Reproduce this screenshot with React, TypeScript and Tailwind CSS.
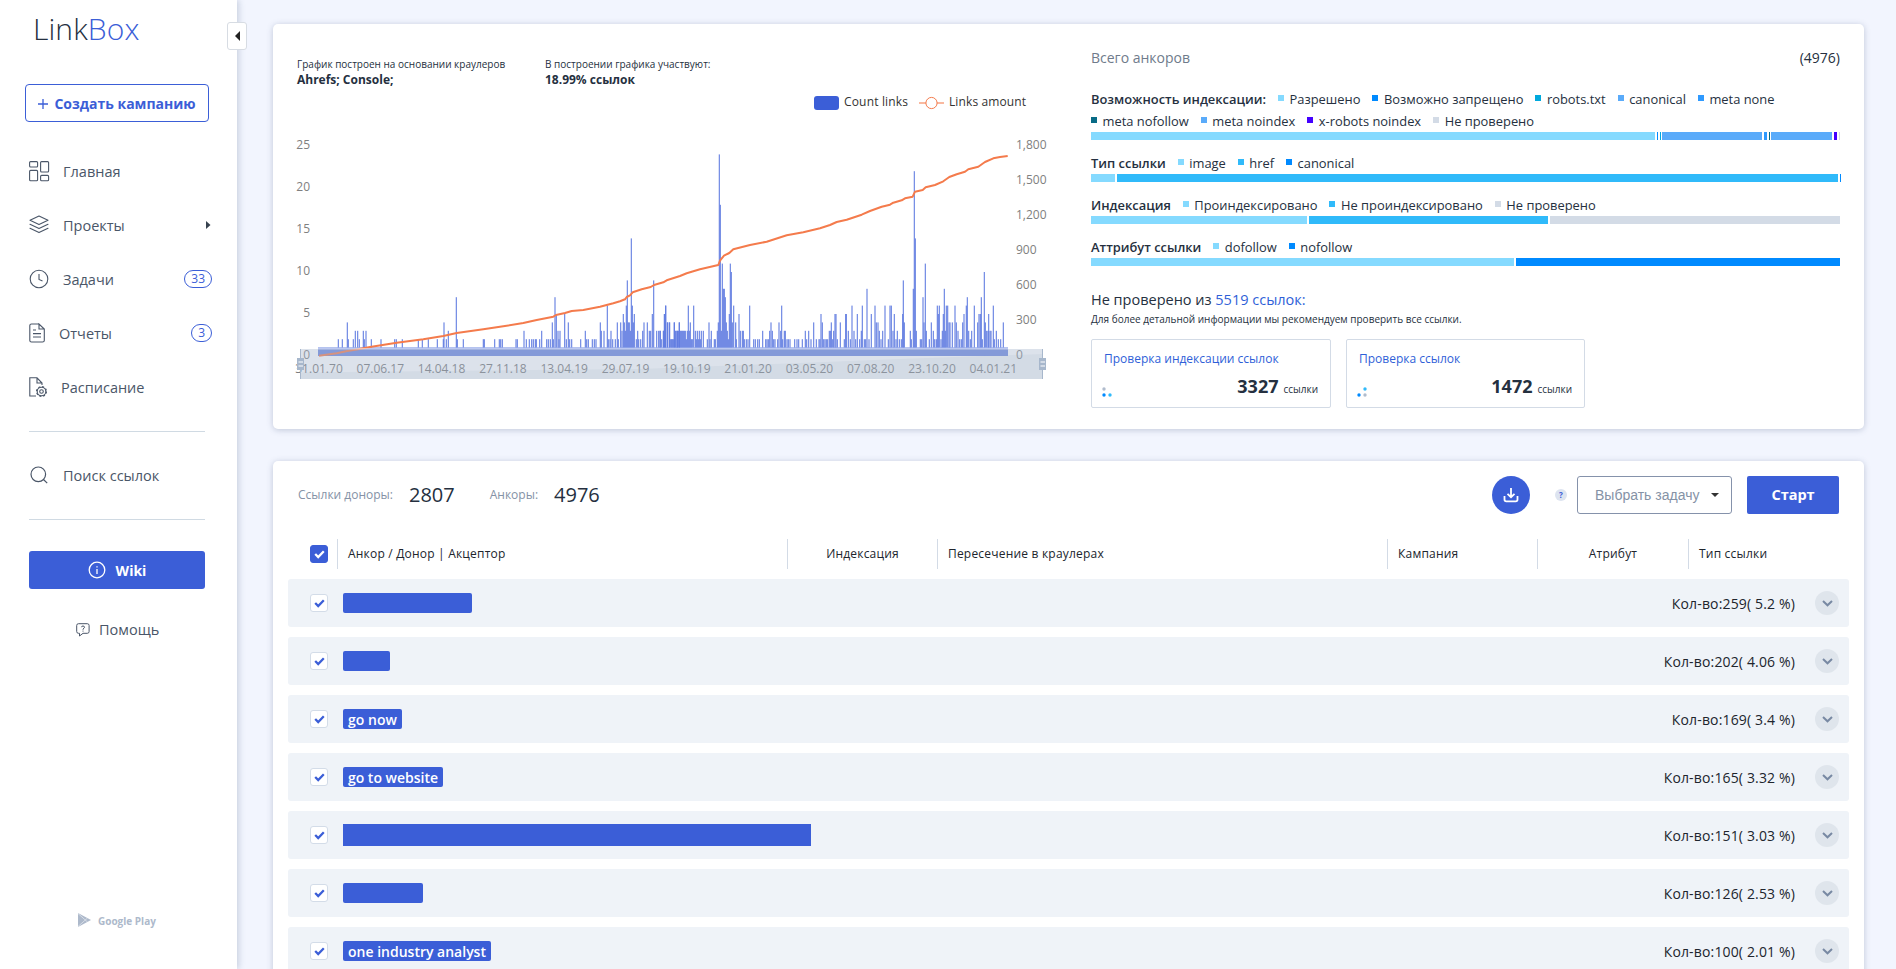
import { ReactNode } from "react";
import clsx from "clsx";

const INK = "#4a5668";

type Bar = [number, number];

// [offset in thirds of a pixel, links found that day]
const EARLY_BARS: Bar[] = [
  [205, 2], [217, 2], [232, 4], [235, 2], [250, 2], [256, 3], [263, 3], [268, 2], [280, 3], [283, 2], [288, 3],
  [304, 2], [333, 2], [374, 2], [379, 2], [397, 2], [445, 2], [457, 2], [475, 2], [502, 2], [520, 2], [522, 4],
  [529, 2], [535, 3], [559, 7], [562, 2], [580, 2], [640, 2], [643, 2], [674, 2], [688, 2], [692, 2], [697, 2],
  [738, 2], [742, 2], [762, 3], [769, 2], [778, 2], [785, 2], [790, 2], [796, 2], [799, 2], [809, 2], [815, 3],
  [830, 2], [835, 2], [841, 2], [847, 4], [850, 2], [855, 7], [859, 5], [864, 3], [867, 2], [870, 3], [884, 5],
  [889, 2], [895, 4], [899, 2], [905, 2], [932, 2], [946, 3], [950, 2], [955, 2], [967, 2], [973, 2], [978, 2],
  [991, 4], [994, 3], [1002, 3], [1012, 6], [1015, 2], [1020, 2], [1023, 3], [1028, 2], [1036, 2], [1042, 4],
  [1045, 2], [1052, 4], [1056, 3], [1060, 5], [1063, 4], [1066, 3], [1069, 6], [1072, 9], [1075, 4], [1078, 4],
  [1081, 3], [1084, 14], [1087, 6], [1090, 4], [1093, 5], [1099, 2], [1103, 3], [1106, 2], [1112, 2], [1118, 3],
  [1122, 4], [1132, 4], [1138, 3], [1142, 3], [1147, 5], [1151, 9], [1160, 3], [1166, 3], [1171, 3], [1180, 3],
  [1183, 5], [1187, 6], [1192, 4], [1199, 4], [1205, 2], [1210, 2], [1213, 4], [1218, 3], [1222, 3], [1228, 4],
];

const LATE_BARS: Bar[] = [
  [0, 3], [5, 2], [11, 3], [14, 5], [17, 6], [23, 4], [28, 4], [32, 2], [37, 2], [43, 4], [47, 3], [52, 3],
  [55, 3], [58, 4], [61, 3], [64, 3], [67, 3], [70, 3], [73, 3], [76, 3], [79, 2], [82, 3], [85, 6], [88, 3],
  [91, 4], [94, 2], [97, 2], [101, 6], [106, 3], [109, 2], [112, 3], [115, 2], [118, 3], [121, 2], [124, 3],
  [130, 3], [142, 2], [147, 4], [150, 2], [154, 3], [163, 2], [166, 2], [172, 3], [175, 4], [178, 24], [181, 18],
  [184, 3], [187, 11], [190, 8], [193, 8], [196, 7], [199, 4], [202, 3], [205, 2], [208, 5], [211, 11], [214, 10],
  [217, 4], [221, 6], [227, 4], [229, 2], [237, 5], [241, 3], [247, 3], [250, 3], [253, 2], [259, 2], [264, 2],
  [269, 6], [281, 2], [286, 2], [293, 2], [298, 2], [308, 3], [317, 2], [321, 2], [325, 2], [329, 3], [333, 4],
  [337, 3], [341, 2], [345, 2], [353, 2], [357, 4], [362, 3], [365, 6], [368, 2], [373, 3], [376, 3], [381, 2],
  [385, 2], [390, 2], [404, 2], [411, 2], [416, 2], [427, 2], [436, 3], [440, 2], [446, 3], [453, 2], [461, 4],
  [469, 2], [477, 2], [480, 2], [483, 5], [487, 4], [491, 2], [495, 2], [499, 2], [503, 2], [508, 3], [512, 3],
  [514, 4], [518, 2], [521, 3], [525, 5], [528, 5], [532, 2], [541, 4], [553, 2], [557, 5], [559, 5], [565, 3],
  [571, 2], [576, 6], [582, 3], [587, 2], [592, 5], [599, 2], [604, 3], [607, 6], [613, 2], [617, 2], [621, 8],
  [627, 2], [634, 5], [645, 6], [649, 4], [654, 4], [658, 3], [663, 2], [668, 3], [675, 6], [685, 2], [690, 6],
  [694, 6], [699, 3], [703, 5], [708, 2], [712, 3], [718, 2], [724, 2], [728, 5], [730, 9], [733, 4], [751, 3],
  [754, 2], [760, 8], [763, 22], [766, 14], [769, 3], [781, 2], [785, 2], [789, 7], [792, 4], [796, 11],
  [799, 3], [808, 2], [814, 4], [820, 3], [824, 2], [829, 2], [832, 6], [835, 5], [838, 6], [843, 2], [847, 3],
  [850, 5], [853, 8], [856, 3], [859, 6], [863, 6], [867, 4], [870, 4], [877, 4], [885, 6], [889, 4], [894, 3],
  [899, 2], [904, 2], [908, 4], [912, 5], [919, 6], [922, 7], [926, 3], [931, 2], [935, 3], [943, 6], [953, 4],
  [957, 5], [961, 5], [964, 7], [967, 2], [973, 10], [976, 4], [980, 3], [984, 3], [986, 5], [990, 3], [993, 3],
  [1000, 6], [1003, 2], [1009, 3], [1015, 2], [1022, 2], [1030, 4],
];

const BARS: Bar[] = [
  ...EARLY_BARS.map(([x, v]): Bar => [270 + x / 3, v]),
  ...LATE_BARS.map(([x, v]): Bar => [660 + x / 3, v]),
];

const LINE =
  "319,355.7 336.7,353.3 347.3,351 358.3,349.3 370,347 396.7,342.7 423.3,339.3 443.3,336 456.7,333 483.3,329.3 503.3,326.3 523.3,323 536.7,320 553.3,316.7 556,315 565,313 571.7,311 583.3,310 600,306.7 613.3,303.3 620,301.3 625,299.3 626.7,297 630,295.3 632.7,292.3 641.7,289.3 650.7,287 654,285 663.3,282.3 666.7,280.3 680,276 " +
  "686.7,273.3 700,269.3 718.3,265 720,260.7 724,255.7 729.3,253 733.3,249.3 750,245 766.7,241.7 786.7,235.3 803.3,232.3 820,228.3 830,225 836.7,222 846.7,219.7 861.7,214.7 870,211 881.7,206.7 890,204.7 893.3,202.7 901.7,200.3 905,198.3 912.7,196.7 915,191.7 922.7,190 925.7,187.3 935,185 943.3,181.3 949.3,177 956.7,174.3 965,171.7 968.3,169.3 978.3,166.7 985,162 993.3,158.3 1000,157 1007.7,156";

const DATES = ["31.01.70", "07.06.17", "14.04.18", "27.11.18", "13.04.19", "29.07.19", "19.10.19", "21.01.20", "03.05.20", "07.08.20", "23.10.20", "04.01.21"];

function Chart() {
  return (
    <svg className="-ml-1 block" width="764" height="300" viewBox="293 88 764 300" fontFamily="Open Sans, sans-serif" fontSize="12" fill="#808080">
      <rect x="814" y="96" width="25" height="14" rx="3" fill="#3b5ed7" />
      <text x="844" y="106" fill="#333" textLength="64">Count links</text>
      <path d="M919 103h25" stroke="#f47b4c" strokeWidth="1.5" opacity=".7" />
      <circle cx="931.5" cy="103" r="5.6" fill="#fff" stroke="#f47b4c" />
      <text x="949" y="106" fill="#333" textLength="77">Links amount</text>
      {[25, 20, 15, 10, 5, 0].map((v, i) => (
        <text key={v} x="310" y={149 + i * 42} textAnchor="end">{v}</text>
      ))}
      {["1,800", "1,500", "1,200", "900", "600", "300", "0"].map((v, i) => (
        <text key={v} x="1016" y={149 + i * 35}>{v}</text>
      ))}
      {DATES.map((d, i) => (
        <text key={d} x={319 + i * 61.3} y="373" textAnchor="middle" textLength="47.5" fill="#777">{d}</text>
      ))}
      <rect x="318" y="347.5" width="690" height="8.5" fill="#6d87e0" />
      {BARS.map(([x, v], i) => (
        <rect key={i} x={x - 0.6} y={356 - v * 8.4} width="1.2" height={v * 8.4 - 8.5} fill="#5f7be0" opacity=".9" />
      ))}
      <polyline points={LINE} fill="none" stroke="#f47b4c" strokeWidth="2" strokeLinejoin="round" />
      <path d="M318 348.9H1008" stroke="#fff" strokeWidth="0.9" />
      <path d="M300 372.5L640 369 800 363 900 359 1043 354V379H300Z" fill="#8c9fb5" opacity=".13" />
      <rect x="300" y="349" width="743" height="30" fill="#a7b7cc" opacity=".4" />
      {[300.5, 1042.5].map((x) => (
        <g key={x}>
          <path d={`M${x} 349v30`} stroke="#a7b7cc" />
          <rect x={x - 3.5} y="358" width="7" height="12" fill="#a7b7cc" />
          <path d={`M${x - 2} 362h4.5M${x - 2} 366h4.5`} stroke="#fff" strokeWidth="1.1" />
        </g>
      ))}
    </svg>
  );
}

type Item = [string, string];
type Segment = [number, string];

const GAP = "bg-white";

function Stat({ title, items, more, segments }: { title: string; items: Item[]; more?: Item[]; segments: Segment[] }) {
  const renderItem = ([color, label]: Item) => (
    <span className="flex items-center gap-[5.5px]" key={label}>
      <i className={clsx("relative -top-px size-1.5", color)} />
      {label}
    </span>
  );
  return (
    <div className="mb-3">
      <div className="flex h-[22px] items-center gap-3 pt-px text-[12.9px] whitespace-nowrap">
        <span className="font-semibold">{title}</span>
        {items.map(renderItem)}
      </div>
      {more ? (
        <div className="flex h-[22px] items-center gap-3 pt-px text-[12.9px] whitespace-nowrap">{more.map(renderItem)}</div>
      ) : null}
      <div className="flex h-2">
        {segments.map(([width, color], i) => (
          <span className={clsx("h-2 shrink-0", color)} key={i} style={{ width }} />
        ))}
      </div>
    </div>
  );
}

function CheckBoxCard({ title, count, dots, width }: { title: string; count: string; dots: ReactNode; width: string }) {
  return (
    <div className={clsx("flex h-[69px] flex-col justify-between rounded-[2px] border border-[#d3dbe6] px-3 pt-[11px] pb-[9px]", width)}>
      <div className="text-[12px] leading-4 text-[#2f5fd8]">{title}</div>
      <div className="flex items-baseline">
        <svg className="mb-px -ml-0.5 self-end" width="10" height="10">{dots}</svg>
        <span className="ml-auto text-[18px] leading-6 font-bold">{count}</span>
        <span className="ml-[5px] text-[10px]">ссылки</span>
      </div>
    </div>
  );
}

function NavItem({ icon, label, gap, children }: { icon: ReactNode; label: string; gap: string; children?: ReactNode }) {
  return (
    <div className="flex h-[54px] items-center pr-[25px] pl-[29px] text-[14.5px] font-medium">
      <svg width="21" height="21" viewBox="0 0 21 21" fill="none" stroke={INK} strokeWidth="1.1">{icon}</svg>
      <span className={clsx("pt-px", gap)}>{label}</span>
      <span className="ml-auto flex">{children}</span>
    </div>
  );
}

function Badge({ children }: { children: ReactNode }) {
  return (
    <span className="flex h-[18px] items-center rounded-full border border-[#3b5ed7] px-1.5 text-[12px] font-normal text-[#3b5ed7]">
      {children}
    </span>
  );
}

function Sidebar() {
  return (
    <aside className="relative z-10 flex h-full w-[237px] shrink-0 flex-col bg-white text-[#4a5668] shadow-[2px_0_6px_rgba(60,80,120,0.22)]">
      <div className="absolute top-[22px] left-[227px] flex h-7 w-5 items-center justify-center rounded-[3px] border border-[#d7dce3] bg-white">
        <svg width="5" height="10"><path d="M5 0v10L0 5z" fill="#222" /></svg>
      </div>
      <div className="h-[84px] pt-2 pl-[33px] text-[30px] leading-[42px] font-light tracking-[0.1px] text-[#253040]">
        Link<span className="text-[#3b5ed7]">Box</span>
      </div>
      <button className="ml-[25px] flex h-[38px] w-[184px] items-center justify-center rounded-[4px] border border-[#3b5ed7] pt-px text-[14px] font-bold text-[#3b5ed7]" type="button">
        <svg className="mr-1.5" width="10" height="10"><path d="M5 0v10M0 5h10" stroke="#3b5ed7" strokeWidth="1.3" /></svg>
        Создать кампанию
      </button>
      <nav className="mt-[22px]">
        <NavItem
          gap="ml-[13px]"
          icon={
            <>
              <rect x=".6" y=".6" width="8" height="5.4" rx="1" />
              <rect x="11.6" y=".6" width="8" height="10.4" rx="1" />
              <rect x=".6" y="9.4" width="8" height="10.4" rx="1" />
              <rect x="11.6" y="14.4" width="8" height="5.4" rx="1" />
            </>
          }
          label="Главная"
        />
        <NavItem
          gap="ml-[13px]"
          icon={<path d="M10 1l9 4.3-9 4.3-9-4.3zM1 9.3l9 4.3 9-4.3M1 13.3l9 4.3 9-4.3" strokeLinejoin="round" strokeLinecap="round" />}
          label="Проекты"
        >
          <svg className="mr-px" width="5" height="8"><path d="M0 0l4.5 4L0 8z" fill="#37424f" /></svg>
        </NavItem>
        <NavItem gap="ml-[13px]" icon={<><circle cx="10" cy="10" r="8.8" /><path d="M10 5v5.5l3.5 1.5" /></>} label="Задачи">
          <Badge>33</Badge>
        </NavItem>
        <NavItem
          gap="ml-[9px]"
          icon={<path d="M10 1H2.5Q.8 1 .8 2.5v15Q.8 19 2.5 19h11q1.8 0 1.8-1.5V6L10 1v5h5M4 7h3M4 10.6h8M4 14h8" />}
          label="Отчеты"
        >
          <Badge>3</Badge>
        </NavItem>
        <NavItem
          gap="ml-[11px]"
          icon={
            <>
              <path d="M7 19H.8V.8H8L13 6v2M8 .8V6h5" />
              <circle cx="12.5" cy="14.5" r="1.8" />
              <circle cx="12.5" cy="14.5" r="4.3" />
              <circle cx="12.5" cy="14.5" r="5" strokeDasharray="2 1.93" />
            </>
          }
          label="Расписание"
        />
      </nav>
      <div className="mx-[29px] mt-[17px] h-px w-[176px] bg-[#d0dae3]" />
      <div className="flex h-[87px] items-center pl-[30px] text-[14.5px] font-medium">
        <svg width="19" height="19" fill="none" stroke={INK} strokeWidth="1.2"><circle cx="8.3" cy="8.3" r="7.3" /><path d="M13.5 13.5l3.7 3.7" /></svg>
        <span className="ml-[14px]">Поиск ссылок</span>
      </div>
      <div className="mx-[29px] h-px w-[176px] bg-[#d0dae3]" />
      <div className="mt-[31px] ml-[29px] flex h-[38px] w-[176px] items-center justify-center rounded-[3px] bg-[#3b5ed7] text-[14px] font-bold text-white">
        <svg className="mr-[10px]" width="18" height="18" fill="none" stroke="#fff" strokeWidth="1.3"><circle cx="9" cy="9" r="7.8" /><path d="M9 8v5M9 5.2v1.4" /></svg>
        Wiki
      </div>
      <div className="mt-[27px] ml-[76px] flex h-7 items-center text-[14.5px] font-medium">
        <svg className="mr-[9px]" width="14" height="14" fill="none" stroke={INK}>
          <path d="M2.5.7h8.8q1.8 0 1.8 1.8v6q0 1.8-1.8 1.8H7L3.5 13v-2.700h-1Q.7 10.300.7 8.500v-6Q.7.7 2.500.7z" />
          <path d="M5.500 4.200Q5.500 3 7 3t1.500 1.300Q8.500 5 7 6v.7M7 7.600v1" />
        </svg>
        Помощь
      </div>
      <div className="mt-auto mb-[38px] ml-[78px] flex items-center text-[10px] leading-5 font-bold text-[#adb9cb]">
        <svg className="relative -top-px mr-[7px]" width="13" height="14"><path d="M0 0l13 7-13 7z" fill="#adb9cb" /><path d="M0 .5L9.500 9M0 13.500L9.500 5" stroke="#fff" strokeWidth=".5" /></svg>
        Google Play
      </div>
    </aside>
  );
}

function Check({ solid }: { solid?: boolean }) {
  return (
    <span
      className={clsx(
        "ml-[22px] flex size-[18px] shrink-0 items-center justify-center rounded-[3px] border",
        solid ? "border-[#3b5ed7] bg-[#3b5ed7]" : "border-[#d3dce8] bg-white"
      )}
    >
      <svg width="11" height="9" fill="none"><path d="M1.200 4l3 3L9.800 1.300" stroke={solid ? "#fff" : "#3b5ed7"} strokeWidth="2.300" /></svg>
    </span>
  );
}

const ROWS = [
  { tag: "h-5 w-[129px] rounded-[2px]", label: "", count: "259( 5.2 %)" },
  { tag: "h-5 w-[47px] rounded-[2px]", label: "", count: "202( 4.06 %)" },
  { tag: "h-5 w-[59px] rounded-[2px]", label: "go now", count: "169( 3.4 %)" },
  { tag: "h-5 w-[100px] rounded-[2px]", label: "go to website", count: "165( 3.32 %)" },
  { tag: "h-[22px] w-[468px]", label: "", count: "151( 3.03 %)" },
  { tag: "h-5 w-[80px] rounded-[2px]", label: "", count: "126( 2.53 %)" },
  { tag: "h-5 w-[148px] rounded-[2px]", label: "one industry analyst", count: "100( 2.01 %)" },
];

const CARD = "rounded-[5px] bg-white shadow-[0_1px_6px_rgba(60,80,120,0.28)]";

export default function App() {
  return (
    <div className="flex h-[969px] w-[1896px] overflow-hidden bg-[#f2f5fe] font-['Open_Sans',sans-serif] text-[#253040]">
      <Sidebar />
      <main className="flex flex-1 flex-col gap-8 pt-6 pr-8 pl-9">
        <section className={clsx("flex h-[405px] shrink-0", CARD)}>
          <div className="w-[818px] pl-6">
            <div className="flex h-16 gap-[40px] pt-[32px] text-[10px] leading-4 whitespace-nowrap">
              <div className="w-[208px]">
                <div>График построен на основании краулеров</div>
                <div className="text-[12px] font-bold">Ahrefs; Console;</div>
              </div>
              <div>
                <div>В построении графика участвуют:</div>
                <div className="text-[12px] font-bold">18.99% ссылок</div>
              </div>
            </div>
            <Chart />
          </div>
          <div className="w-[750px]">
            <div className="flex h-[64px] w-[749px] justify-between pt-6 text-[14px] leading-5">
              <span className="text-[#6f7b8b]">Всего анкоров</span>
              <span className="font-medium">(4976)</span>
            </div>
            <Stat
              title="Возможность индексации:"
              items={[["bg-[#85daff]", "Разрешено"], ["bg-[#008aff]", "Возможно запрещено"], ["bg-[#00a9dd]", "robots.txt"], ["bg-[#5aabfa]", "canonical"], ["bg-[#2f9aff]", "meta none"]]}
              more={[["bg-[#086b86]", "meta nofollow"], ["bg-[#5aabfa]", "meta noindex"], ["bg-[#4400ff]", "x-robots noindex"], ["bg-[#d3dbe6]", "Не проверено"]]}
              segments={[
                [564, "bg-[#85daff]"], [2, GAP], [1, "bg-[#008aff]"], [2, GAP], [1, "bg-[#00a9dd]"], [1, GAP], [100, "bg-[#5aabfa]"], [2, GAP],
                [3, "bg-[#2f9aff]"], [2, GAP], [1, "bg-[#086b86]"], [1, GAP], [61, "bg-[#5aabfa]"], [2, GAP], [3, "bg-[#4400ff]"], [2, GAP], [1, "bg-[#d3dbe6]"],
              ]}
            />
            <Stat
              title="Тип ссылки"
              items={[["bg-[#85daff]", "image"], ["bg-[#30bafa]", "href"], ["bg-[#008aff]", "canonical"]]}
              segments={[[24, "bg-[#85daff]"], [2, GAP], [721, "bg-[#30bafa]"], [2, GAP], [1, "bg-[#008aff]"]]}
            />
            <Stat
              title="Индексация"
              items={[["bg-[#85daff]", "Проиндексировано"], ["bg-[#30bafa]", "Не проиндексировано"], ["bg-[#d3dbe6]", "Не проверено"]]}
              segments={[[216, "bg-[#85daff]"], [2, GAP], [239, "bg-[#30bafa]"], [2, GAP], [290, "bg-[#d3dbe6]"]]}
            />
            <Stat
              title="Аттрибут ссылки"
              items={[["bg-[#85daff]", "dofollow"], ["bg-[#008aff]", "nofollow"]]}
              segments={[[423, "bg-[#85daff]"], [2, GAP], [324, "bg-[#008aff]"]]}
            />
            <div className="mt-[23px] text-[14.5px] leading-[22px] font-medium">
              Не проверено из <span className="text-[#2f5fd8]">5519 ссылок:</span>
            </div>
            <div className="text-[10px] leading-4">Для более детальной информации мы рекомендуем проверить все ссылки.</div>
            <div className="mt-3 flex gap-[15px]">
              <CheckBoxCard
                count="3327"
                dots={<><circle cx="2" cy="2" r="1.700" fill="#b0bccd" /><circle cx="2" cy="8" r="1.700" fill="#008aff" /><circle cx="8" cy="8" r="1.700" fill="#30bafa" /></>}
                title="Проверка индексации ссылок"
                width="w-[240px]"
              />
              <CheckBoxCard
                count="1472"
                dots={<><circle cx="8" cy="2" r="1.700" fill="#30bafa" /><circle cx="2" cy="8" r="1.700" fill="#008aff" /><circle cx="8" cy="8" r="1.700" fill="#b0bccd" /></>}
                title="Проверка ссылок"
                width="w-[239px]"
              />
            </div>
          </div>
        </section>

        <section className={clsx("h-[560px] shrink-0 px-[15px]", CARD)}>
          <div className="flex h-[68px] items-center px-[10px]">
            <span className="text-[12px] text-[#8592a6]">Ссылки доноры:</span>
            <span className="ml-4 text-[20px] font-medium">2807</span>
            <span className="ml-[35px] text-[12px] text-[#8592a6]">Анкоры:</span>
            <span className="ml-4 text-[20px] font-medium">4976</span>
            <span className="ml-auto flex size-[38px] items-center justify-center rounded-full bg-[#3b5ed7]">
              <svg width="16" height="16" fill="none" stroke="#fff" strokeWidth="1.800"><path d="M8 1v9M4.500 6.800L8 10.200l3.500-3.400M1.500 9v3.500q0 1.800 1.800 1.800h9.400q1.800 0 1.800-1.800V9" /></svg>
            </span>
            <span className="ml-[25px] flex size-3 items-center justify-center rounded-full bg-[#dde4f0] text-[8px] font-bold text-[#3b5ed7]">?</span>
            <span className="ml-[10px] flex h-[38px] w-[155px] items-center rounded-[3px] border border-[#8592ab] pl-[17px] font-['Liberation_Sans',sans-serif] text-[14px] text-[#8592a6]">
              Выбрать задачу
              <svg className="ml-auto mr-3" width="8" height="4"><path d="M0 0h8L4 4z" fill="#333" /></svg>
            </span>
            <span className="ml-[15px] flex h-[38px] w-[92px] items-center justify-center rounded-[2px] bg-[#3b5ed7] text-[14.500px] font-bold text-white">Старт</span>
          </div>
          <div className="mt-[10px] flex h-[30px] items-center text-[12px] font-medium tracking-[0.2px] text-[#20252d]">
            <div className="w-[49px]"><Check solid /></div>
            <div className="flex h-full w-[450px] items-center border-l border-[#d3dbe6] pl-[10px]">Анкор / Донор | Акцептор</div>
            <div className="flex h-full w-[150px] items-center justify-center border-l border-[#d3dbe6]">Индексация</div>
            <div className="flex h-full w-[450px] items-center border-l border-[#d3dbe6] pl-[10px]">Пересечение в краулерах</div>
            <div className="flex h-full w-[150px] items-center border-l border-[#d3dbe6] pl-[10px]">Кампания</div>
            <div className="flex h-full w-[151px] items-center justify-center border-l border-[#d3dbe6]">Атрибут</div>
            <div className="flex h-full items-center border-l border-[#d3dbe6] pl-[10px]">Тип ссылки</div>
          </div>
          <div className="mt-[10px] space-y-[10px]">
            {ROWS.map((row) => (
              <div className="flex h-12 items-center rounded-[3px] bg-[#eff3f8] pr-[10px]" key={row.count}>
                <Check />
                <span className={clsx("ml-[15px] flex items-center justify-center bg-[#3b5ed7] text-[14px] font-semibold whitespace-nowrap text-white", row.tag)}>
                  {row.label}
                </span>
                <span className="ml-auto text-[14px] font-medium tracking-[0.15px] text-[#20252d]">Кол-во:{row.count}</span>
                <span className="ml-5 flex size-6 items-center justify-center rounded-full bg-[#dfe5ec]">
                  <svg width="11" height="7" fill="none"><path d="M1 1l4.500 4.300L10 1" stroke="#7889a3" strokeWidth="2" /></svg>
                </span>
              </div>
            ))}
          </div>
        </section>
      </main>
    </div>
  );
}
